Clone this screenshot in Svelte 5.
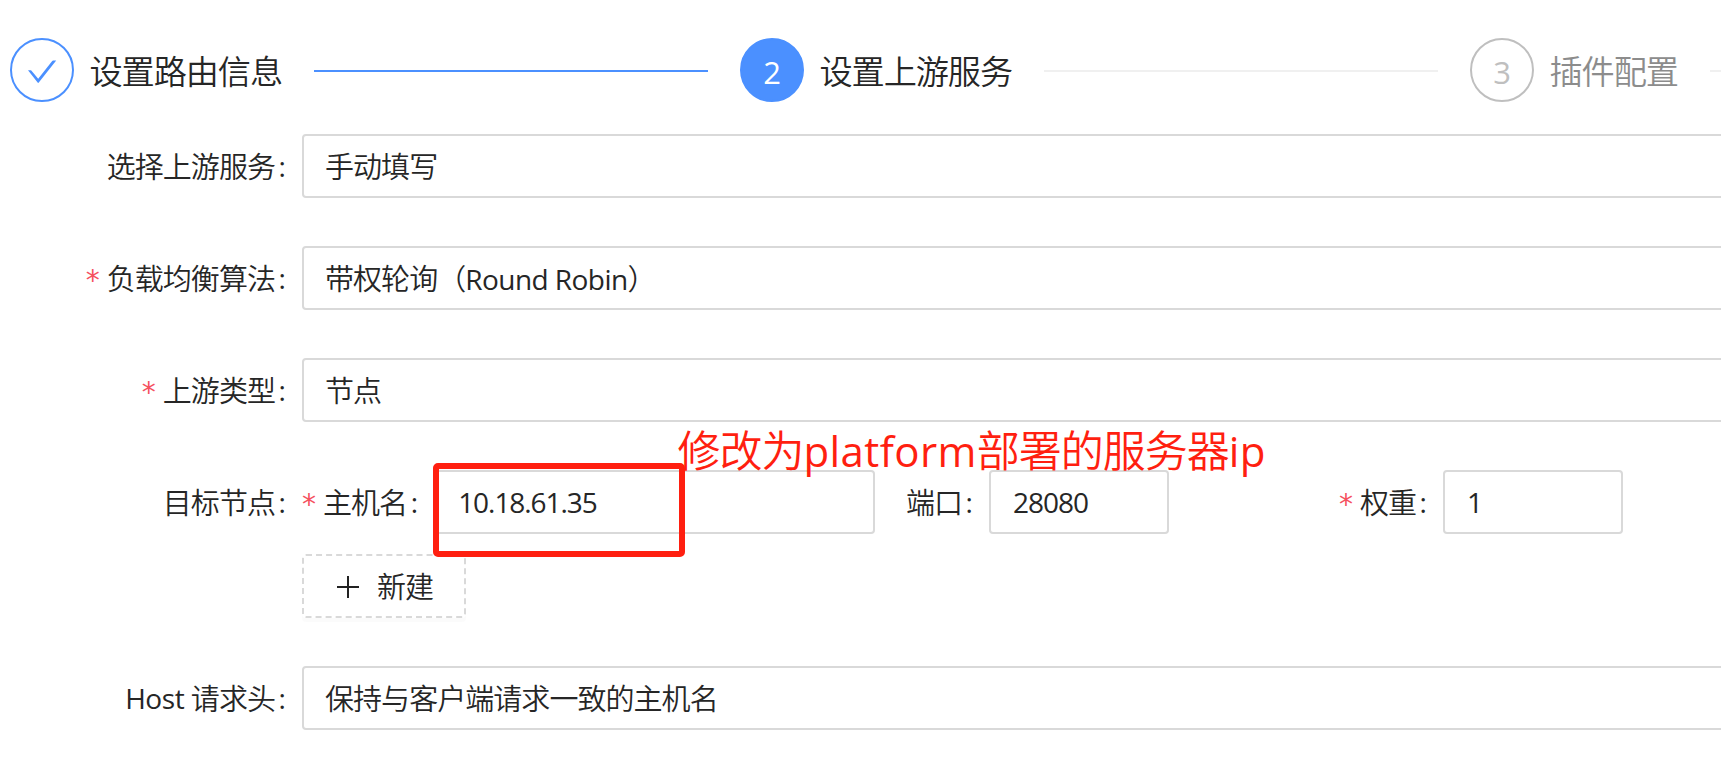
<script>
  const steps = [
    { title: '设置路由信息', state: 'finish' },
    { title: '设置上游服务', state: 'process' },
    { title: '插件配置', state: 'wait' }
  ];
</script>

{#snippet label(text, required, latin = '')}
  <span class="label">
    {#if required}<span class="star">*</span>{/if}{#if latin}<span class="latin">{latin}</span>{/if}<span class="cjk">{text}</span><span class="colon">:</span>
  </span>
{/snippet}

<main>
  <div class="steps">
    {#each steps as step, i}
      <div class="step {step.state}">
        <div class="circle">
          {#if step.state === 'finish'}
            <svg width="30" height="24" viewBox="0 0 30 24"><path d="M1 10.2H3.6Q4 10.2 4.3 10.5L11.2 18.8 25.2 1.1Q25.6 .5 26.2 .5H29.2L11.8 22.6Q11.2 23.3 10.6 22.6Z" fill="#4b90ff" /></svg>
          {:else}{i + 1}{/if}
        </div>
        <div class="title">{step.title}</div>
        <div class="tail"></div>
      </div>
    {/each}
  </div>

  <div class="row">
    <div class="lead">{@render label('选择上游服务', false)}</div>
    <div class="field wide cjk">手动填写</div>
  </div>
  <div class="row">
    <div class="lead">{@render label('负载均衡算法', true)}</div>
    <div class="field wide cjk">带权轮询（<span class="rr">Round Robin</span>）</div>
  </div>
  <div class="row">
    <div class="lead">{@render label('上游类型', true)}</div>
    <div class="field wide cjk">节点</div>
  </div>
  <div class="row nodes">
    <div class="lead">{@render label('目标节点', false)}</div>
    <div class="group host">{@render label('主机名', true)}<div class="field num">10.18.61.35</div></div>
    <div class="group port">{@render label('端口', false)}<div class="field num">28080</div></div>
    <div class="group weight">{@render label('权重', true)}<div class="field num">1</div></div>
  </div>
  <div class="row add">
    <button>
      <svg width="22" height="22" viewBox="0 0 22 22"><path d="M11 0V22M0 11H22" stroke="#222" stroke-width="2" /></svg>
      <span class="cjk">新建</span>
    </button>
  </div>
  <div class="row">
    <div class="lead">{@render label('请求头', false, 'Host')}</div>
    <div class="field wide cjk">保持与客户端请求一致的主机名</div>
  </div>

  <div class="mark"></div>
  <div class="note">修改为<span class="pf">platform</span>部署的服务器<span class="ip">ip</span></div>
</main>

<style>
  :global(body) {
    margin: 0;
    background: #fff;
    overflow: hidden;
  }
  main {
    position: relative;
    box-sizing: border-box;
    width: 1721px;
    height: 767px;
    padding-top: 38px;
    overflow: hidden;
    background: #fff;
    color: #262626;
    font: 400 28px/64px 'Open Sans', 'Noto Sans CJK SC', sans-serif;
    white-space: nowrap;
  }
  .cjk {
    font-size: 29px;
    font-weight: 350;
    letter-spacing: -0.95px;
  }
  .steps {
    display: flex;
    gap: 32px;
    width: 2160px;
    height: 64px;
    padding-left: 10px;
    margin-bottom: 32px;
  }
  .step {
    display: flex;
    flex: 0 0 698px;
    align-items: center;
  }
  .circle {
    box-sizing: border-box;
    display: flex;
    align-items: center;
    justify-content: center;
    width: 64px;
    height: 64px;
    margin-right: 16px;
    border: 2px solid #4b90ff;
    border-radius: 50%;
    font-size: 31px;
    line-height: 60px;
    padding-top: 3px;
  }
  .process .circle {
    background: #4b90ff;
    color: #fff;
  }
  .wait .circle {
    border-color: #bfbfbf;
    color: #bfbfbf;
  }
  .title {
    margin-left: -0.5px;
    font-size: 33.2px;
    font-weight: 350;
    letter-spacing: -1.1px;
    padding-top: 4px;
  }
  .wait .title {
    color: #8c8c8c;
  }
  .tail {
    flex: 1;
    height: 2px;
    margin: 2px 0 0 32px;
    background: #f0f0f0;
  }
  .finish .tail {
    background: #4b90ff;
  }
  .row {
    display: flex;
    height: 64px;
    margin-bottom: 48px;
  }
  .lead {
    display: flex;
    justify-content: flex-end;
    flex: 0 0 302px;
  }
  .label {
    display: flex;
  }
  .label .cjk {
    margin: 1px 1px 0 -1px;
  }
  .star {
    width: 14px;
    margin-right: 8px;
    color: #f5515f;
    font: 400 28px/70px 'DejaVu Sans', sans-serif;
  }
  .latin {
    margin-right: 7.5px;
    letter-spacing: -0.4px;
  }
  .colon {
    width: 7px;
    margin: 0 16.5px 0 2.5px;
  }
  .field {
    box-sizing: border-box;
    height: 64px;
    padding-left: 22px;
    border: 2px solid #d9d9d9;
    border-radius: 4px;
    line-height: 61px;
    background: #fff;
  }
  .wide {
    flex: 0 0 1480px;
    padding-left: 21px;
  }
  .rr {
    font-size: 28px;
    font-weight: 400;
    letter-spacing: -0.55px;
  }
  .num {
    flex: 1;
    letter-spacing: -1.05px;
  }
  .nodes {
    margin-bottom: 20px;
  }
  .group {
    display: flex;
  }
  .host {
    width: 573px;
    margin-right: 32px;
  }
  .port {
    width: 262px;
    margin-right: 170px;
  }
  .weight {
    width: 284px;
  }
  .add {
    padding-left: 302px;
  }
  button {
    box-sizing: border-box;
    display: flex;
    align-items: center;
    gap: 18px;
    width: 164px;
    height: 64px;
    padding: 0 0 0 33px;
    border: 2px dashed #d9d9d9;
    border-radius: 4px;
    background: #fff;
    color: inherit;
    font: inherit;
    box-shadow: 0 4px 0 rgba(0, 0, 0, 0.016);
  }
  button svg {
    margin-top: 2px;
  }
  button .cjk {
    padding-top: 2px;
  }
  .mark {
    position: absolute;
    left: 433px;
    top: 463px;
    box-sizing: border-box;
    width: 252px;
    height: 94px;
    border: 6px solid #ff1f10;
    border-radius: 5px;
  }
  .note {
    position: absolute;
    left: 677.5px;
    top: 419px;
    color: #ff1f10;
    font-size: 43px;
    font-weight: 350;
    letter-spacing: -1px;
    line-height: 64px;
  }
  .pf,
  .ip {
    font-size: 42px;
    font-weight: 400;
    letter-spacing: 0.4px;
  }
</style>
